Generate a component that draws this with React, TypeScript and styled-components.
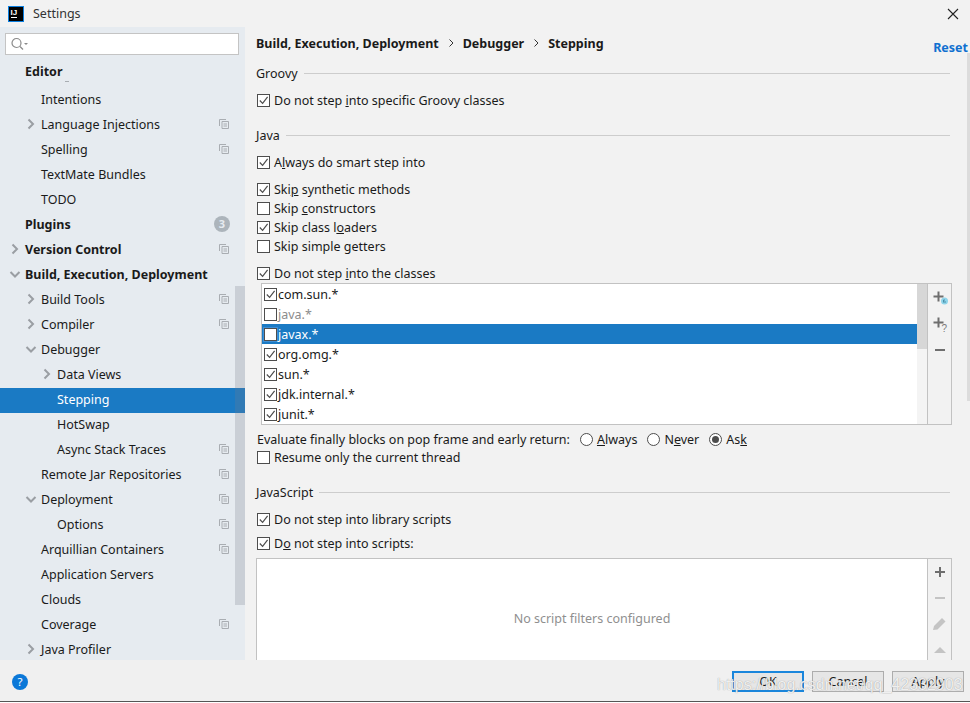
import { FunctionComponent, ReactNode } from 'react';
import styled, { createGlobalStyle } from 'styled-components';

const GlobalStyle = createGlobalStyle`
  html, body {
    margin: 0;
    padding: 0;
    background: #ffffff;
  }
  body {
    font-family: 'Noto Sans', 'Open Sans', sans-serif;
    font-size: 12.5px;
    color: #1a1a1a;
  }
`;

const Window = styled.div`
  position: relative;
  width: 970px;
  height: 703px;
  overflow: hidden;
  display: flex;
  flex-direction: column;
  background: #f2f2f2;
`;

const TitleBar = styled.header`
  height: 27px;
  flex: none;
  display: flex;
  align-items: center;
  padding: 0 11px 0 8px;
  gap: 9px;
  color: #333;
`;

const TitleText = styled.span`
  flex: 1;
`;

const Body = styled.div`
  flex: none;
  height: 633px;
  display: flex;
  overflow: hidden;
`;

const Sidebar = styled.aside`
  position: relative;
  width: 245px;
  flex: none;
  background: #e6ebf0;
  overflow: hidden;
`;

const SearchBox = styled.div`
  height: 22px;
  margin: 6px 6px 8px 5px;
  display: flex;
  align-items: center;
  padding-left: 5px;
  box-sizing: border-box;
  background: #fff;
  border: 1px solid #c4c4c4;
`;

const TreeRow = styled.div<{ $depth: number; $selected?: boolean; $bold?: boolean; $sticky?: boolean }>`
  height: 25px;
  box-sizing: border-box;
  display: flex;
  align-items: center;
  padding: 0 16px ${({ $sticky }) => ($sticky ? 9 : 3)}px ${({ $depth }) => 9 + $depth * 16}px;
  background: ${({ $selected }) => ($selected ? '#1a7ac4' : 'transparent')};
  color: ${({ $selected }) => ($selected ? '#fff' : '#1a1a1a')};
  font-weight: ${({ $bold }) => ($bold ? 700 : 400)};
`;

const Arrow = styled.span`
  width: 16px;
  flex: none;
  display: flex;
  align-items: center;
`;

const TreeLabel = styled.span`
  flex: 1;
  white-space: nowrap;
`;

const CountBadge = styled.span`
  width: 16px;
  height: 16px;
  margin-right: -1px;
  border-radius: 50%;
  background: #acb4bb;
  color: #e6ebf0;
  font-size: 11px;
  line-height: 16px;
  text-align: center;
`;

const StickyMark = styled.div`
  position: absolute;
  left: 65px;
  top: 54px;
  width: 4px;
  height: 1px;
  background: #a8adb2;
`;

const SidebarThumb = styled.div`
  position: absolute;
  left: 235px;
  top: 259px;
  width: 10px;
  height: 319px;
  background: rgba(120, 125, 135, 0.25);
`;

const Main = styled.main`
  flex: 1;
  min-width: 0;
  position: relative;
  overflow: hidden;
  padding: 0 20px 0 11px;
`;

const Crumbs = styled.div`
  height: 33px;
  box-sizing: border-box;
  padding-bottom: 1px;
  display: flex;
  align-items: center;
  justify-content: space-between;
  font-weight: 700;
`;

const CrumbPath = styled.div`
  display: flex;
  align-items: center;
  gap: 9px;
`;

const ResetLink = styled.span`
  color: #1070d0;
  position: relative;
  top: 4px;
  right: -18px;
`;

const GroupTitle = styled.div<{ $top: number }>`
  display: flex;
  align-items: center;
  gap: 6px;
  height: 19px;
  margin-top: ${({ $top }) => $top}px;
  &::after {
    content: '';
    flex: 1;
    height: 1px;
    background: #cdcdcd;
  }
`;

const CheckRow = styled.label<{ $top: number }>`
  display: flex;
  align-items: center;
  gap: 4px;
  height: 19px;
  margin-top: ${({ $top }) => $top}px;
  margin-left: 1px;
  white-space: nowrap;
`;

const Box = styled.span<{ $focus?: boolean }>`
  width: 13px;
  height: 13px;
  flex: none;
  box-sizing: border-box;
  display: flex;
  background: #fff;
  border: 1px solid #4d4d4d;
  outline: ${({ $focus }) => ($focus ? '1px solid #3f8fd6' : 'none')};
`;

const FilterTable = styled.div`
  height: 142px;
  margin-left: 5px;
  width: 691px;
  box-sizing: border-box;
  display: flex;
  border: 1px solid #c2c2c2;
`;

const FilterList = styled.div`
  flex: 1;
  background: #fff;
  overflow: hidden;
`;

const FilterRow = styled.div<{ $selected?: boolean; $muted?: boolean }>`
  height: 20px;
  display: flex;
  align-items: center;
  gap: 1px;
  padding-left: 2px;
  background: ${({ $selected }) => ($selected ? '#1a7ac4' : 'transparent')};
  color: ${({ $selected, $muted }) => ($selected ? '#fff' : $muted ? '#8c8c8c' : '#1a1a1a')};
`;

const ListScroll = styled.div`
  width: 10px;
  flex: none;
  background: linear-gradient(#d7d7d7 65px, #f4f4f4 65px);
`;

const SideTools = styled.div`
  width: 24px;
  flex: none;
  box-sizing: border-box;
  border-left: 1px solid #c2c2c2;
  display: flex;
  flex-direction: column;
  align-items: center;
  gap: 6px;
  padding-top: 4px;
  background: #f2f2f2;
`;

const ToolIcon = styled.span`
  width: 20px;
  height: 20px;
  display: flex;
`;

const InlineOptions = styled.div`
  height: 18px;
  margin: 5px 0 0 1px;
  display: flex;
  align-items: center;
  white-space: nowrap;
`;

const RadioItem = styled.span`
  display: flex;
  align-items: center;
  gap: 4px;
  margin-left: 10px;
`;

const Radio = styled.span<{ $on?: boolean }>`
  width: 13px;
  height: 13px;
  box-sizing: border-box;
  border: 1px solid #4d4d4d;
  border-radius: 50%;
  background: #fff;
  display: flex;
  align-items: center;
  justify-content: center;
  &::after {
    content: '';
    width: 7px;
    height: 7px;
    border-radius: 50%;
    background: ${({ $on }) => ($on ? '#4d4d4d' : 'transparent')};
  }
`;

const ScriptPanel = styled.div`
  height: 120px;
  width: 696px;
  margin-top: 5px;
  box-sizing: border-box;
  display: flex;
  border: 1px solid #c2c2c2;
  border-bottom: none;
`;

const EmptyText = styled.div`
  flex: 1;
  background: #fff;
  color: #8f8f8f;
  display: flex;
  align-items: center;
  justify-content: center;
`;

const MainThumb = styled.div`
  position: absolute;
  right: 0;
  top: 26px;
  width: 3px;
  height: 348px;
  background: #dcdcdc;
`;

const Footer = styled.footer`
  height: 41px;
  flex: none;
  display: flex;
  align-items: center;
  gap: 8px;
  padding: 0 6px 0 12px;
  background: #f0f0f0;
`;

const HelpIcon = styled.svg`
  width: 16px;
  height: 16px;
  margin-top: 3px;
`;

const FooterGap = styled.div`
  flex: 1;
`;

const DialogButton = styled.button<{ $primary?: boolean }>`
  width: 72px;
  height: 21px;
  margin-top: 1px;
  padding: 0;
  box-sizing: border-box;
  font: inherit;
  color: #1a1a1a;
  background: #e6e6e6;
  border: ${({ $primary }) => ($primary ? '2px solid #1a86dc' : '1px solid #adadad')};
`;

const Watermark = styled.div`
  position: absolute;
  left: 717px;
  top: 676px;
  width: 253px;
  overflow: hidden;
  white-space: nowrap;
  font-family: 'Liberation Sans', sans-serif;
  font-size: 16px;
  color: rgba(255, 255, 255, 0.85);
  text-shadow: 0 0 1px rgba(120, 120, 120, 0.8);
`;

const BottomEdge = styled.div`
  height: 2px;
  flex: none;
  box-sizing: border-box;
  background: #fff;
  border-top: 1px solid #555;
`;

const LogoBox = styled.svg`
  width: 16px;
  height: 16px;
  flex: none;
`;

const Chevron: FunctionComponent<{ open?: boolean }> = ({ open }) => (
  <Arrow>
    <svg width="12" height="12" viewBox="0 0 12 12" fill="none" stroke="#9a9ea3" strokeWidth="2">
      <path d={open ? 'M1.5 4l4.5 4.5L10.500 4' : 'M3.500 1.500L8 6l-4.500 4.500'} />
    </svg>
  </Arrow>
);

const ProjectIcon = () => (
  <svg width="10" height="10" viewBox="0 0 10 10" fill="none" stroke="#a9adb2" strokeWidth="1">
    <path d="M7 .5H.5V7" />
    <path d="M3 2.500h6.500v7H3z" />
    <path d="M4.500 5h3.500M4.500 7h3.500" />
  </svg>
);

const Tick = () => (
  <svg width="11" height="11" viewBox="0 0 11 11" fill="none" stroke="#4d4d4d" strokeWidth="1.200">
    <path d="M1.800 5.500l2.800 2.800 5-6.500" />
  </svg>
);

const CrumbArrow = () => (
  <svg width="6" height="8" viewBox="0 0 6 8" fill="none" stroke="#333" strokeWidth="1">
    <path d="M1.500 .5L5 4 1.500 7.500" />
  </svg>
);

const CheckBox: FunctionComponent<{ checked?: boolean; focus?: boolean }> = ({ checked, focus }) => (
  <Box $focus={focus}>{checked && <Tick />}</Box>
);

const Check: FunctionComponent<{ top: number; checked?: boolean; children: ReactNode }> = ({
  top,
  checked,
  children,
}) => (
  <CheckRow $top={top}>
    <CheckBox checked={checked} />
    <span>{children}</span>
  </CheckRow>
);

const PlusIcon = () => <path d="M8.500 3.500v10M3.500 8.500h10" stroke="#6e6e6e" strokeWidth="2" fill="none" />;

type TreeItem = {
  label: string;
  depth: number;
  arrow?: 'open' | 'closed';
  bold?: boolean;
  selected?: boolean;
  sticky?: boolean;
  copy?: boolean;
  count?: number;
};

const tree: TreeItem[] = [
  { label: 'Editor', depth: 1, bold: true, sticky: true },
  { label: 'Intentions', depth: 2 },
  { label: 'Language Injections', depth: 2, arrow: 'closed', copy: true },
  { label: 'Spelling', depth: 2, copy: true },
  { label: 'TextMate Bundles', depth: 2 },
  { label: 'TODO', depth: 2 },
  { label: 'Plugins', depth: 1, bold: true, count: 3 },
  { label: 'Version Control', depth: 1, bold: true, arrow: 'closed', copy: true },
  { label: 'Build, Execution, Deployment', depth: 1, bold: true, arrow: 'open' },
  { label: 'Build Tools', depth: 2, arrow: 'closed', copy: true },
  { label: 'Compiler', depth: 2, arrow: 'closed', copy: true },
  { label: 'Debugger', depth: 2, arrow: 'open' },
  { label: 'Data Views', depth: 3, arrow: 'closed' },
  { label: 'Stepping', depth: 3, selected: true },
  { label: 'HotSwap', depth: 3 },
  { label: 'Async Stack Traces', depth: 3, copy: true },
  { label: 'Remote Jar Repositories', depth: 2, copy: true },
  { label: 'Deployment', depth: 2, arrow: 'open', copy: true },
  { label: 'Options', depth: 3, copy: true },
  { label: 'Arquillian Containers', depth: 2, copy: true },
  { label: 'Application Servers', depth: 2 },
  { label: 'Clouds', depth: 2 },
  { label: 'Coverage', depth: 2, copy: true },
  { label: 'Java Profiler', depth: 2, arrow: 'closed' },
];

const filters = [
  { label: 'com.sun.*', checked: true },
  { label: 'java.*', muted: true },
  { label: 'javax.*', selected: true },
  { label: 'org.omg.*', checked: true },
  { label: 'sun.*', checked: true },
  { label: 'jdk.internal.*', checked: true },
  { label: 'junit.*', checked: true },
];

const App: FunctionComponent = () => (
  <Window>
    <GlobalStyle />
    <TitleBar>
      <LogoBox viewBox="0 0 16 16">
        <rect width="16" height="16" fill="#0b7fe0" />
        <rect x="1" y="1" width="14" height="14" fill="#000" />
        <text x="2.500" y="8.500" fill="#fff" fontSize="8" fontWeight="700" fontFamily="Liberation Sans">
          IJ
        </text>
        <rect x="3" y="11" width="6" height="1" fill="#fff" />
      </LogoBox>
      <TitleText>Settings</TitleText>
      <svg width="12" height="12" viewBox="0 0 12 12" stroke="#222" strokeWidth="1.100">
        <path d="M1 1l10 10M11 1L1 11" />
      </svg>
    </TitleBar>
    <Body>
      <Sidebar>
        <SearchBox>
          <svg width="18" height="14" viewBox="0 0 18 14" fill="none" stroke="#8a8a8a" strokeWidth="1.200">
            <circle cx="5.500" cy="6" r="4.500" />
            <path d="M9 9.500l3 3" />
            <path d="M13 6h4l-2 2z" fill="#8a8a8a" stroke="none" />
          </svg>
        </SearchBox>
        {tree.map((item) => (
          <TreeRow
            key={item.label}
            $depth={item.depth - 1}
            $bold={item.bold}
            $selected={item.selected}
            $sticky={item.sticky}
          >
            {item.arrow ? <Chevron open={item.arrow === 'open'} /> : <Arrow />}
            <TreeLabel>{item.label}</TreeLabel>
            {item.copy && <ProjectIcon />}
            {item.count !== undefined && <CountBadge>{item.count}</CountBadge>}
          </TreeRow>
        ))}
        <StickyMark />
        <SidebarThumb />
      </Sidebar>
      <Main>
        <Crumbs>
          <CrumbPath>
            <span>Build, Execution, Deployment</span>
            <CrumbArrow />
            <span>Debugger</span>
            <CrumbArrow />
            <span>Stepping</span>
          </CrumbPath>
          <ResetLink>Reset</ResetLink>
        </Crumbs>
        <GroupTitle $top={4}>Groovy</GroupTitle>
        <Check top={8} checked>
          Do not step <u>i</u>nto specific Groovy classes
        </Check>
        <GroupTitle $top={16}>Java</GroupTitle>
        <Check top={8} checked>
          A<u>l</u>ways do smart step into
        </Check>
        <Check top={8} checked>
          Ski<u>p</u> synthetic methods
        </Check>
        <Check top={0}>
          Skip <u>c</u>onstructors
        </Check>
        <Check top={0} checked>
          Skip class l<u>o</u>aders
        </Check>
        <Check top={0}>Skip simple getters</Check>
        <Check top={8} checked>
          Do not step <u>i</u>nto the classes
        </Check>
        <FilterTable>
          <FilterList>
            {filters.map((f) => (
              <FilterRow key={f.label} $selected={f.selected} $muted={f.muted}>
                <CheckBox checked={f.checked} focus={f.selected} />
                <span>{f.label}</span>
              </FilterRow>
            ))}
          </FilterList>
          <ListScroll />
          <SideTools>
            <ToolIcon>
              <svg width="20" height="20" viewBox="0 0 20 20">
                <PlusIcon />
                <circle cx="14.500" cy="13" r="3.500" fill="#8fd4ea" />
                <path d="M13 14h3M13.500 14v-2h1.500" stroke="#4b8fa8" fill="none" />
              </svg>
            </ToolIcon>
            <ToolIcon>
              <svg width="20" height="20" viewBox="0 0 20 20">
                <PlusIcon />
                <text x="11.500" y="18" fontSize="10" fill="#7a7a7a" fontFamily="Liberation Sans">
                  ?
                </text>
              </svg>
            </ToolIcon>
            <ToolIcon>
              <svg width="20" height="20" viewBox="0 0 20 20">
                <path d="M5 10h10" stroke="#6e6e6e" strokeWidth="2" />
              </svg>
            </ToolIcon>
          </SideTools>
        </FilterTable>
        <InlineOptions>
          <span>Evaluate finally blocks on pop frame and early return:</span>
          <RadioItem>
            <Radio />
            <span>
              <u>A</u>lways
            </span>
          </RadioItem>
          <RadioItem>
            <Radio />
            <span>
              N<u>e</u>ver
            </span>
          </RadioItem>
          <RadioItem>
            <Radio $on />
            <span>
              As<u>k</u>
            </span>
          </RadioItem>
        </InlineOptions>
        <Check top={0}>Resume only the current thread</Check>
        <GroupTitle $top={16}>JavaScript</GroupTitle>
        <Check top={8} checked>
          Do not step into library scripts
        </Check>
        <Check top={5} checked>
          D<u>o</u> not step into scripts:
        </Check>
        <ScriptPanel>
          <EmptyText>No script filters configured</EmptyText>
          <SideTools>
            <ToolIcon>
              <svg width="20" height="20" viewBox="0 0 20 20">
                <path d="M10 4v10M5 9h10" stroke="#6e6e6e" strokeWidth="2" />
              </svg>
            </ToolIcon>
            <ToolIcon>
              <svg width="20" height="20" viewBox="0 0 20 20">
                <path d="M5 9h10" stroke="#c4c4c4" strokeWidth="2" />
              </svg>
            </ToolIcon>
            <ToolIcon>
              <svg width="20" height="20" viewBox="0 0 20 20">
                <path d="M3 15l1-4 8-8 3.500 3.500-8 8z" fill="#c4c4c4" />
              </svg>
            </ToolIcon>
            <ToolIcon>
              <svg width="20" height="20" viewBox="0 0 20 20">
                <path d="M4 12l6-6 6 6z" fill="#c4c4c4" />
              </svg>
            </ToolIcon>
          </SideTools>
        </ScriptPanel>
        <MainThumb />
      </Main>
    </Body>
    <Footer>
      <HelpIcon viewBox="0 0 16 16">
        <circle cx="8" cy="8" r="8" fill="#0b78d8" />
        <text x="8" y="12" textAnchor="middle" fontSize="11.500" fill="#fff" fontFamily="Noto Sans">
          ?
        </text>
      </HelpIcon>
      <FooterGap />
      <DialogButton $primary>OK</DialogButton>
      <DialogButton>Cancel</DialogButton>
      <DialogButton>Apply</DialogButton>
    </Footer>
    <BottomEdge />
    <Watermark>https://blog.csdn.net/qq_42332903</Watermark>
  </Window>
);

export default App;
